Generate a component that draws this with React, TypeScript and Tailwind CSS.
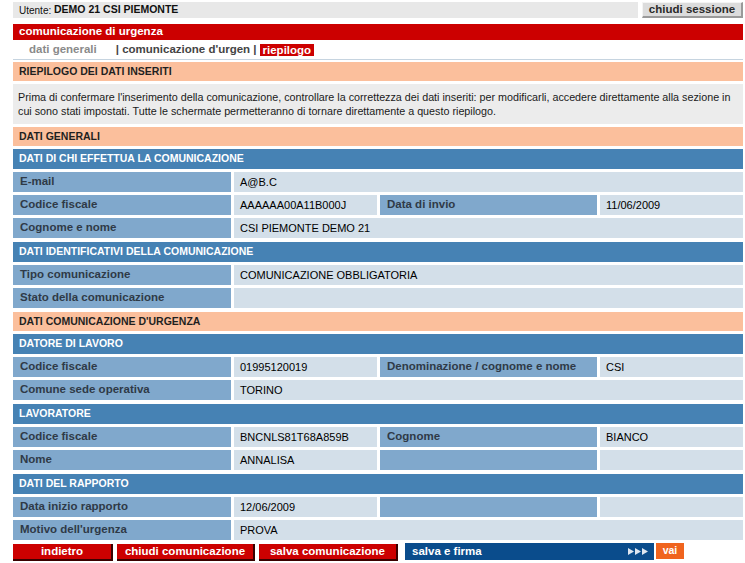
import React from "react";

type Cell = { label: string; value?: string; label2?: string; value2?: string; split?: boolean };

const labelCls =
  "flex items-center bg-[#80a8cc] pl-[7px] text-[11.5px] font-bold text-[#2f3a47] whitespace-nowrap overflow-hidden";
const valueCls = "flex items-center bg-[#d3dfe9] pl-[6px] text-[11px] text-black whitespace-nowrap overflow-hidden";

function DataRow({ row, extra }: { row: Cell; extra?: boolean }) {
  return (
    <div
      className={`grid h-[20px] grid-cols-[218px_143px_217px_143px] gap-x-[3px] ${extra ? "mb-px" : ""}`}
    >
      <div className={labelCls}>{row.label}</div>
      {row.split ? (
        <>
          <div className={valueCls}>{row.value}</div>
          <div className={`${labelCls} pl-[5px]`}>{row.label2}</div>
          <div className={`${valueCls} pl-[4px]`}>{row.value2}</div>
        </>
      ) : (
        <div className={`${valueCls} col-span-3`}>{row.value}</div>
      )}
    </div>
  );
}

function BlueHeader({ title }: { title: string }) {
  return (
    <div className="flex h-[20px] items-center bg-[#4682b4] pl-[6px] text-[10.5px] font-bold text-white">
      {title}
    </div>
  );
}

function SalmonHeader({ title, extra }: { title: string; extra?: boolean }) {
  return (
    <div
      className={`flex h-[19px] items-center bg-[#fbbf9c] pl-[6px] text-[10.5px] font-bold text-[#1f1f1f] ${extra ? "mt-px" : ""}`}
    >
      {title}
    </div>
  );
}

function Section({ title, rows }: { title: string; rows: Cell[] }) {
  return (
    <>
      <BlueHeader title={title} />
      {rows.map((r, i) => (
        <DataRow key={r.label} row={r} extra={i === rows.length - 1} />
      ))}
    </>
  );
}

function Triangles() {
  return (
    <svg width="21" height="7" viewBox="0 0 21 7" className="block">
      <polygon points="0,0 6,3.5 0,7" fill="#dfe6f0" />
      <polygon points="7,0 13,3.5 7,7" fill="#dfe6f0" />
      <polygon points="14,0 20,3.5 14,7" fill="#dfe6f0" />
    </svg>
  );
}

const redBtn =
  "flex h-[17px] items-center justify-center bg-[#cc0000] border-r-2 border-b-2 border-[#3a0000] text-[11.5px] font-bold text-white";

export default function App() {
  return (
    <div className="h-[563px] w-[745px] overflow-hidden bg-white font-['Liberation_Sans',Arial,sans-serif] text-black">
      <div className="ml-[13px] mr-[2px] flex flex-col pt-[2px]">
        {/* user bar */}
        <div className="flex h-[16px] gap-[4px]">
          <div className="flex flex-1 items-center bg-[#e8e8e8] pl-[6px] text-[10px] text-[#111]">
            Utente:&nbsp;<span className="text-[10.5px] font-bold">DEMO 21 CSI PIEMONTE</span>
          </div>
          <div className="flex w-[101px] items-center justify-center border-t border-l border-t-[#f4f4f4] border-l-[#f4f4f4] border-r-2 border-b-2 border-r-[#9a9a9a] border-b-[#9a9a9a] bg-[#dcdcdc] text-[11.5px] font-bold text-[#2a2a2a]">
            chiudi sessione
          </div>
        </div>

        <div className="mt-[6px] flex h-[16px] items-center bg-[#cc0000] pl-[6px] text-[11.5px] font-bold text-white">
          comunicazione di urgenza
        </div>

        {/* tabs */}
        <div className="flex h-[20px] items-center border-b border-[#c6d4e0] pt-px text-[11.5px] font-bold">
          <span className="ml-[16px] text-[#8a8a8a]">dati generali</span>
          <span className="ml-[19px] text-[#444]">| comunicazione d&apos;urgen |</span>
          <span className="ml-[3px] bg-[#cc0000] px-[3px] leading-[12px] text-white">riepilogo</span>
        </div>

        <div className="mt-[2px] flex flex-col gap-[3px]">
          <SalmonHeader title="RIEPILOGO DEI DATI INSERITI" />
          <div className="h-[40px] bg-[#ececec] px-[5px] pt-[6px] text-[10.75px] leading-[14px] text-[#1a1a1a]">
            <div className="whitespace-nowrap">
              Prima di confermare l&apos;inserimento della comunicazione, controllare la correttezza dei dati inseriti: per
              modificarli, accedere direttamente alla sezione in
            </div>
            <div className="whitespace-nowrap">
              cui sono stati impostati. Tutte le schermate permetteranno di tornare direttamente a questo riepilogo.
            </div>
          </div>

          <SalmonHeader title="DATI GENERALI" />
          <Section
            title="DATI DI CHI EFFETTUA LA COMUNICAZIONE"
            rows={[
              { label: "E-mail", value: "A@B.C" },
              {
                label: "Codice fiscale",
                value: "AAAAAA00A11B000J",
                label2: "Data di invio",
                value2: "11/06/2009",
                split: true,
              },
              { label: "Cognome e nome", value: "CSI PIEMONTE DEMO 21" },
            ]}
          />
          <Section
            title="DATI IDENTIFICATIVI DELLA COMUNICAZIONE"
            rows={[
              { label: "Tipo comunicazione", value: "COMUNICAZIONE OBBLIGATORIA" },
              { label: "Stato della comunicazione", value: "" },
            ]}
          />

          <SalmonHeader title="DATI COMUNICAZIONE D'URGENZA" />
          <Section
            title="DATORE DI LAVORO"
            rows={[
              {
                label: "Codice fiscale",
                value: "01995120019",
                label2: "Denominazione / cognome e nome",
                value2: "CSI",
                split: true,
              },
              { label: "Comune sede operativa", value: "TORINO" },
            ]}
          />
          <Section
            title="LAVORATORE"
            rows={[
              { label: "Codice fiscale", value: "BNCNLS81T68A859B", label2: "Cognome", value2: "BIANCO", split: true },
              { label: "Nome", value: "ANNALISA", label2: "", value2: "", split: true },
            ]}
          />
          <Section
            title="DATI DEL RAPPORTO"
            rows={[
              { label: "Data inizio rapporto", value: "12/06/2009", label2: "", value2: "", split: true },
              { label: "Motivo dell'urgenza", value: "PROVA" },
            ]}
          />

          {/* actions */}
          <div className="flex items-start">
            <div className={`${redBtn} w-[100px]`}>indietro</div>
            <div className={`${redBtn} ml-[4px] w-[138px]`}>chiudi comunicazione</div>
            <div className={`${redBtn} ml-[4px] w-[139px]`}>salva comunicazione</div>
            <div className="-mt-px ml-[7px] flex h-[17px] w-[249px] items-center justify-between bg-[#0a4c8c] pl-[7px] pr-[5px] text-[11.5px] font-bold text-white">
              <span>salva e firma</span>
              <Triangles />
            </div>
            <div className="-mt-px ml-[2px] flex h-[16px] w-[28px] items-center justify-center bg-[#f0641e] text-[10.5px] font-bold text-white">
              vai
            </div>
          </div>
        </div>
      </div>
    </div>
  );
}
